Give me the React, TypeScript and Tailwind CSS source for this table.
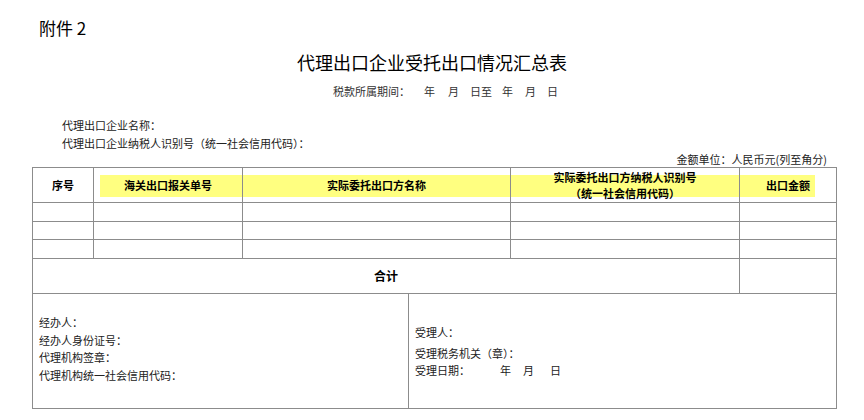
const body = { fontFamily: '"Noto Sans CJK SC", "Liberation Sans", sans-serif' };

const line = "border-[#8c8c8c]";

function HeaderCell({
  w,
  yellow,
  last,
  children,
}: {
  w: string;
  yellow?: string;
  last?: boolean;
  children: React.ReactNode;
}) {
  return (
    <div className={`relative flex h-full items-center justify-center ${w} ${last ? "" : `border-r ${line}`}`}>
      {yellow && <div className={`absolute top-[7px] h-[22px] bg-[#ffff80] ${yellow}`} />}
      <div className="relative text-center text-[11px] font-bold leading-[16px] text-black">{children}</div>
    </div>
  );
}

function DataRow({ h }: { h: string }) {
  return (
    <div className={`flex ${h} border-b ${line}`}>
      <div className={`w-[61px] border-r ${line}`} />
      <div className={`w-[149px] border-r ${line}`} />
      <div className={`w-[268px] border-r ${line}`} />
      <div className={`w-[229px] border-r ${line}`} />
      <div className="flex-1" />
    </div>
  );
}

export default function App() {
  return (
    <div className="h-[420px] w-[864px] overflow-hidden bg-white text-[#222]" style={body}>
      <div className="h-[40px] pl-[39px] pt-[17px] text-[17px] leading-[22px] text-black">附件 2</div>

      <div className="h-[40px] pt-[10px] text-center text-[18px] leading-[24px] text-black">
        代理出口企业受托出口情况汇总表
      </div>

      <div className="flex h-[20px] pl-[333px] pt-[3px] text-[11px] leading-[16px] text-[#333]">
        <span>税款所属期间：</span>
        <span className="ml-[14px]">年</span>
        <span className="ml-[13px]">月</span>
        <span className="ml-[11px]">日至</span>
        <span className="ml-[10px]">年</span>
        <span className="ml-[12px]">月</span>
        <span className="ml-[11px]">日</span>
      </div>

      <div className="pl-[62px] pt-[16px] text-[11px] leading-[18px]">
        <div>代理出口企业名称：</div>
        <div>代理出口企业纳税人识别号（统一社会信用代码）：</div>
      </div>

      <div className="pr-[37px] text-right text-[11px] leading-[15px]">金额单位：人民币元(列至角分)</div>

      <div className={`ml-[32px] w-[805px] border ${line}`}>
        <div className={`flex h-[35px] border-b ${line}`}>
          <HeaderCell w="w-[61px]">序号</HeaderCell>
          <HeaderCell w="w-[149px]" yellow="left-[6px] right-0">
            海关出口报关单号
          </HeaderCell>
          <HeaderCell w="w-[268px]" yellow="left-0 right-0">
            实际委托出口方名称
          </HeaderCell>
          <HeaderCell w="w-[229px]" yellow="left-0 right-0">
            <div>实际委托出口方纳税人识别号</div>
            <div>（统一社会信用代码）</div>
          </HeaderCell>
          <HeaderCell w="flex-1" yellow="left-0 right-[21px]" last>
            出口金额
          </HeaderCell>
        </div>

        <DataRow h="h-[19px]" />
        <DataRow h="h-[18px]" />
        <DataRow h="h-[19px]" />

        <div className={`flex h-[35px] border-b ${line}`}>
          <div className={`flex w-[707px] items-center justify-center border-r ${line} text-[12px] font-bold text-black`}>
            合计
          </div>
          <div className="flex-1" />
        </div>

        <div className="flex h-[114px] text-[11px]">
          <div className={`w-[376px] border-r ${line} pl-[6px] pt-[20px] leading-[17.5px]`}>
            <div>经办人：</div>
            <div>经办人身份证号：</div>
            <div>代理机构签章：</div>
            <div>代理机构统一社会信用代码：</div>
          </div>
          <div className="flex-1 pl-[6px] pt-[30px] leading-[16px]">
            <div>受理人：</div>
            <div className="mt-[5px]">受理税务机关（章）：</div>
            <div className="mt-[1px] flex">
              <span>受理日期：</span>
              <span className="ml-[30px]">年</span>
              <span className="ml-[12px]">月</span>
              <span className="ml-[16px]">日</span>
            </div>
          </div>
        </div>
      </div>
    </div>
  );
}
